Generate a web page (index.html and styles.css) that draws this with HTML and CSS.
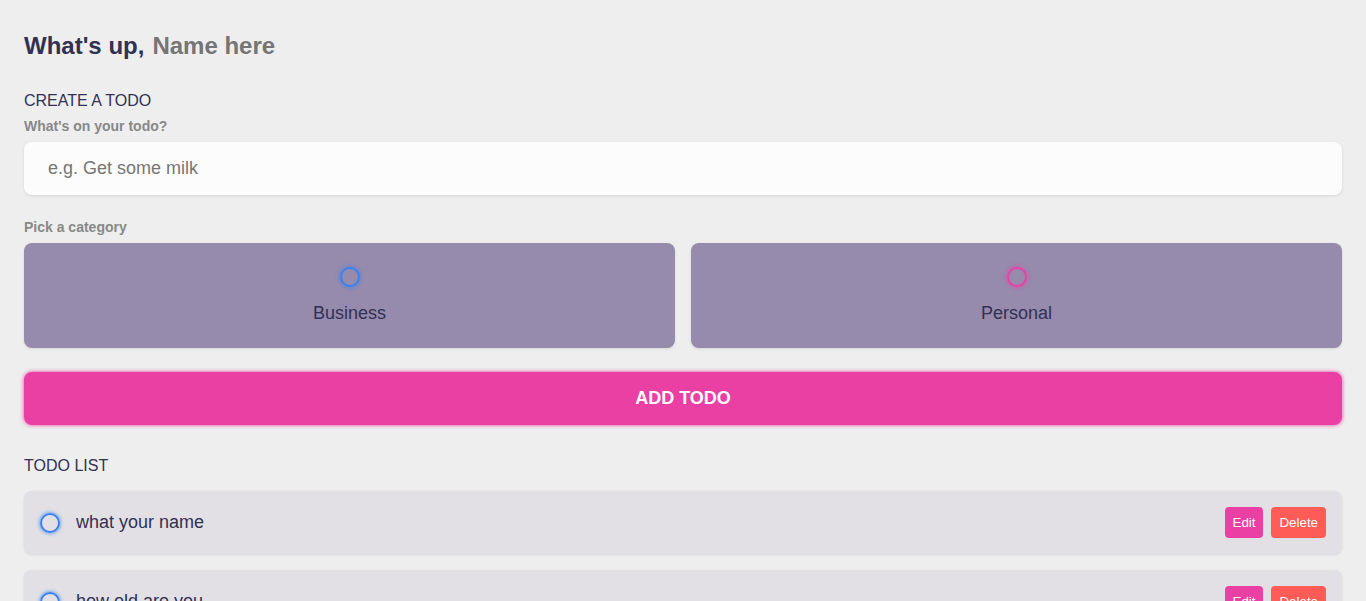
FILE: index.html
```
<!DOCTYPE html>
<html lang="en">
<head>
<meta charset="utf-8">
<meta name="viewport" content="width=device-width, initial-scale=1">
<title>Todo List</title>
<link rel="stylesheet" href="styles.css">
</head>
<body>
<main class="app">
  <section class="greeting">
    <h2 class="title">What's up, <input type="text" id="name" class="name-input" placeholder="Name here" aria-label="Name"></h2>
  </section>
  <section class="create-todo">
    <h3>Create a todo</h3>
    <form id="new-todo-form">
      <h4><label for="content">What's on your todo?</label></h4>
      <input type="text" id="content" class="content-input" placeholder="e.g. Get some milk">
      <h4>Pick a category</h4>
      <div class="options">
        <label class="option">
          <input type="radio" name="category" value="business">
          <span class="bubble business"></span>
          <span>Business</span>
        </label>
        <label class="option">
          <input type="radio" name="category" value="personal">
          <span class="bubble personal"></span>
          <span>Personal</span>
        </label>
      </div>
      <button type="submit" class="submit">Add todo</button>
    </form>
  </section>
  <section class="todo-list">
    <h3>Todo list</h3>
    <div class="list">
      <div class="todo-item">
        <label class="check"><input type="checkbox" aria-label="Done"><span class="bubble business"></span></label>
        <input type="text" class="todo-content" value="what your name" aria-label="Todo" readonly>
        <div class="actions"><button type="button" class="edit">Edit</button><button type="button" class="delete">Delete</button></div>
      </div>
      <div class="todo-item">
        <label class="check"><input type="checkbox" aria-label="Done"><span class="bubble business"></span></label>
        <input type="text" class="todo-content" value="how old are you" aria-label="Todo" readonly>
        <div class="actions"><button type="button" class="edit">Edit</button><button type="button" class="delete">Delete</button></div>
      </div>
    </div>
  </section>
</main>
</body>
</html>
```
FILE: styles.css
```
:root {
  --primary: #ea40a4;
  --business: #3a82ee;
  --light: #eee;
  --grey: #888;
  --dark: #313154;
  --danger: #ff5b57;
  --shadow: 0 1px 3px rgba(0, 0, 0, 0.1);
}
* {
  margin: 0;
  padding: 0;
  box-sizing: border-box;
  font-family: "Liberation Sans", Arial, sans-serif;
}
html {
  scrollbar-width: none;
}
body {
  background: var(--light);
  color: var(--dark);
}
input,
button {
  appearance: none;
  border: none;
  outline: none;
  background: none;
}
button {
  cursor: pointer;
}
section {
  margin: 32px 0;
  padding: 0 24px;
}
h3 {
  color: var(--dark);
  font-size: 16px;
  font-weight: 400;
  line-height: 18px;
  margin-bottom: 8px;
  text-transform: uppercase;
}
h4 {
  color: var(--grey);
  font-size: 14px;
  font-weight: 700;
  line-height: 16px;
  margin-bottom: 8px;
}
.title {
  display: flex;
  gap: 8px;
  font-size: 24px;
  line-height: 27px;
}
.name-input {
  flex: 1;
  min-width: 0;
  font-size: 24px;
  font-weight: 700;
  color: var(--dark);
}
.content-input {
  display: block;
  width: 100%;
  font-size: 18px;
  line-height: 21px;
  padding: 16px 24px;
  background: #fcfcfc;
  border-radius: 8px;
  box-shadow: var(--shadow);
  margin-bottom: 24px;
  color: var(--dark);
}
.options {
  display: grid;
  grid-template-columns: 1fr 1fr;
  gap: 16px;
  margin-bottom: 24px;
}
.option {
  position: relative;
  display: flex;
  flex-direction: column;
  align-items: center;
  padding: 24px;
  background: #968aad;
  border-radius: 8px;
  box-shadow: var(--shadow);
  font-size: 18px;
  line-height: 21px;
  cursor: pointer;
}
.check {
  position: relative;
}
.option input,
.check input {
  position: absolute;
  opacity: 0;
}
.bubble {
  display: block;
  flex: none;
  width: 20px;
  height: 20px;
  border: 2px solid var(--business);
  border-radius: 50%;
  box-shadow: 0 0 4px var(--business);
}
.personal {
  border-color: var(--primary);
  box-shadow: 0 0 4px var(--primary);
}
.option .bubble {
  margin-bottom: 16px;
}
.submit {
  display: block;
  width: 100%;
  font-size: 18px;
  font-weight: 700;
  line-height: 21px;
  padding: 16px 24px;
  color: #fff;
  text-transform: uppercase;
  background: var(--primary);
  border-radius: 8px;
  box-shadow: 0 0 4px var(--primary);
}
.list {
  margin: 16px 0;
}
.todo-item {
  display: flex;
  align-items: center;
  padding: 16px;
  background: #e2e0e5;
  border-radius: 8px;
  box-shadow: var(--shadow);
  margin-bottom: 16px;
}
.todo-content {
  flex: 1;
  min-width: 0;
  margin: 0 16px;
  font-size: 18px;
  color: var(--dark);
}
.actions {
  display: flex;
  gap: 8px;
}
.actions button {
  padding: 8px;
  line-height: 15px;
  color: #fff;
  border-radius: 4px;
}
.edit {
  background: var(--primary);
}
.delete {
  background: var(--danger);
}
```
